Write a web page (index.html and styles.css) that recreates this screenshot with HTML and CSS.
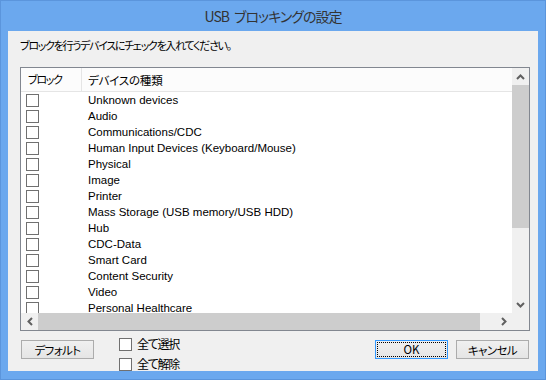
FILE: index.html
```html
<!DOCTYPE html>
<html lang="ja">
<head>
	<meta charset="UTF-8">
	<title>USB ブロッキングの設定</title>
	<link rel="stylesheet" href="styles.css">
</head>
<body>
	<div class="window">
		<div class="titlebar">USB ブロッキングの設定</div>
		<div class="client">
			<p class="hint">ブロックを行うデバイスにチェックを入れてください。</p>
			<div class="listbox">
				<div class="view">
					<div class="header">
						<span class="col-block">ブロック</span>
						<span class="col-type">デバイスの種類</span>
					</div>
					<ul class="rows">
						<li><span class="cb"></span><span class="name">Unknown devices</span></li>
						<li><span class="cb"></span><span class="name">Audio</span></li>
						<li><span class="cb"></span><span class="name">Communications/CDC</span></li>
						<li><span class="cb"></span><span class="name">Human Input Devices (Keyboard/Mouse)</span></li>
						<li><span class="cb"></span><span class="name">Physical</span></li>
						<li><span class="cb"></span><span class="name">Image</span></li>
						<li><span class="cb"></span><span class="name">Printer</span></li>
						<li><span class="cb"></span><span class="name">Mass Storage (USB memory/USB HDD)</span></li>
						<li><span class="cb"></span><span class="name">Hub</span></li>
						<li><span class="cb"></span><span class="name">CDC-Data</span></li>
						<li><span class="cb"></span><span class="name">Smart Card</span></li>
						<li><span class="cb"></span><span class="name">Content Security</span></li>
						<li><span class="cb"></span><span class="name">Video</span></li>
						<li><span class="cb"></span><span class="name">Personal Healthcare</span></li>
					</ul>
				</div>
				<div class="vscroll">
					<div class="arrow"><svg width="9" height="6" viewBox="0 0 9 6"><path d="M1 5 L4.5 1.5 L8 5" fill="none" stroke="#606060" stroke-width="2"/></svg></div>
					<div class="thumb"></div>
					<div class="track"></div>
					<div class="arrow"><svg width="9" height="6" viewBox="0 0 9 6"><path d="M1 1 L4.5 4.5 L8 1" fill="none" stroke="#606060" stroke-width="2"/></svg></div>
				</div>
				<div class="hscroll">
					<div class="arrow"><svg width="6" height="9" viewBox="0 0 6 9"><path d="M5 1 L1.5 4.5 L5 8" fill="none" stroke="#606060" stroke-width="2"/></svg></div>
					<div class="thumb"></div>
					<div class="track"></div>
					<div class="arrow"><svg width="6" height="9" viewBox="0 0 6 9"><path d="M1 1 L4.5 4.5 L1 8" fill="none" stroke="#606060" stroke-width="2"/></svg></div>
				</div>
				<div class="corner"></div>
			</div>
			<div class="footer">
				<button class="btn">デフォルト</button>
				<div class="checks">
					<label><span class="cb"></span>全て選択</label>
					<label><span class="cb"></span>全て解除</label>
				</div>
				<button class="btn ok"><span>OK</span></button>
				<button class="btn">キャンセル</button>
			</div>
		</div>
	</div>
</body>
</html>
```

FILE: styles.css
```css
body {
	margin: 0;
	font-family: "Noto Sans CJK JP", sans-serif;
	font-feature-settings: "palt";
	font-size: 11px;
	letter-spacing: -1.3px;
	color: #000;
}
ul {
	margin: 0;
	padding: 0;
	list-style: none;
}
.window {
	width: 546px;
	height: 380px;
	box-sizing: border-box;
	border: 1px solid #5b95dc;
	background: #6ba8ee;
	display: flex;
	flex-direction: column;
	overflow: hidden;
}
.titlebar {
	height: 30px;
	line-height: 30px;
	text-align: center;
	font-size: 14px;
	letter-spacing: -1px;
	word-spacing: 3px;
	color: #333;
}
.client {
	height: 340px;
	margin: 0 7px 0 7px;
	background: #f0f0f0;
	overflow: hidden;
}
.hint {
	margin: 7px 0 0 12px;
	height: 14px;
	line-height: 14px;
}
.listbox {
	margin: 15px 0 0 12px;
	width: 510px;
	height: 264px;
	box-sizing: border-box;
	border: 1px solid #828790;
	background: #fff;
	display: grid;
	grid-template-columns: 1fr 17px;
	grid-template-rows: 1fr 17px;
}
.view {
	overflow: hidden;
}
.header {
	height: 23px;
	border-bottom: 1px solid #e5e5e5;
	background: #fcfcfc;
	display: flex;
	align-items: center;
}
.col-block {
	width: 53px;
	padding-left: 7px;
	height: 23px;
	line-height: 23px;
	border-right: 1px solid #e5e5e5;
}
.col-type {
	padding-left: 6px;
	font-size: 11.5px;
	letter-spacing: -0.2px;
}
.rows li {
	height: 16px;
	display: flex;
	align-items: center;
	white-space: nowrap;
}
.rows .cb {
	margin-left: 5px;
}
.name {
	margin-left: 49px;
	font-family: "Liberation Sans", sans-serif;
	font-size: 11.5px;
	letter-spacing: 0;
}
.cb {
	display: inline-block;
	width: 11px;
	height: 11px;
	border: 1px solid #707070;
	background: #fff;
	flex: none;
}
.vscroll {
	background: #f0f0f0;
	display: flex;
	flex-direction: column;
}
.vscroll .arrow {
	height: 17px;
	display: flex;
	align-items: center;
	justify-content: center;
}
.vscroll .thumb {
	height: 143px;
	background: #cdcdcd;
}
.vscroll .track {
	flex: 1;
}
.hscroll {
	background: #f0f0f0;
	display: flex;
}
.hscroll .arrow {
	width: 17px;
	display: flex;
	align-items: center;
	justify-content: center;
}
.hscroll .thumb {
	width: 442px;
	background: #cdcdcd;
}
.hscroll .track {
	flex: 1;
}
.corner {
	background: #f0f0f0;
}
.footer {
	display: flex;
	align-items: flex-start;
	margin: 7px 0 0 13px;
}
.btn {
	width: 73px;
	height: 19px;
	padding: 0;
	border: 1px solid #acacac;
	background: linear-gradient(#f0f0f0, #e5e5e5);
	font: inherit;
	font-size: 11.5px;
	letter-spacing: -0.6px;
	color: #000;
}
.footer > .btn:first-child {
	margin-top: 2px;
}
.checks {
	margin-left: 25px;
	display: flex;
	flex-direction: column;
	gap: 8px;
}
.checks label {
	height: 12px;
	line-height: 12px;
	display: flex;
	align-items: flex-start;
	font-size: 12px;
}
.checks .cb {
	margin-right: 5px;
}
.ok {
	margin: 2px 0 0 auto;
	border-color: #3399ff;
	padding: 1px;
	letter-spacing: 0;
}
.ok span {
	display: block;
	height: 100%;
	box-sizing: border-box;
	border: 1px dotted #000;
	line-height: 13px;
}
.ok + .btn {
	margin: 2px 9px 0 8px;
}
```
